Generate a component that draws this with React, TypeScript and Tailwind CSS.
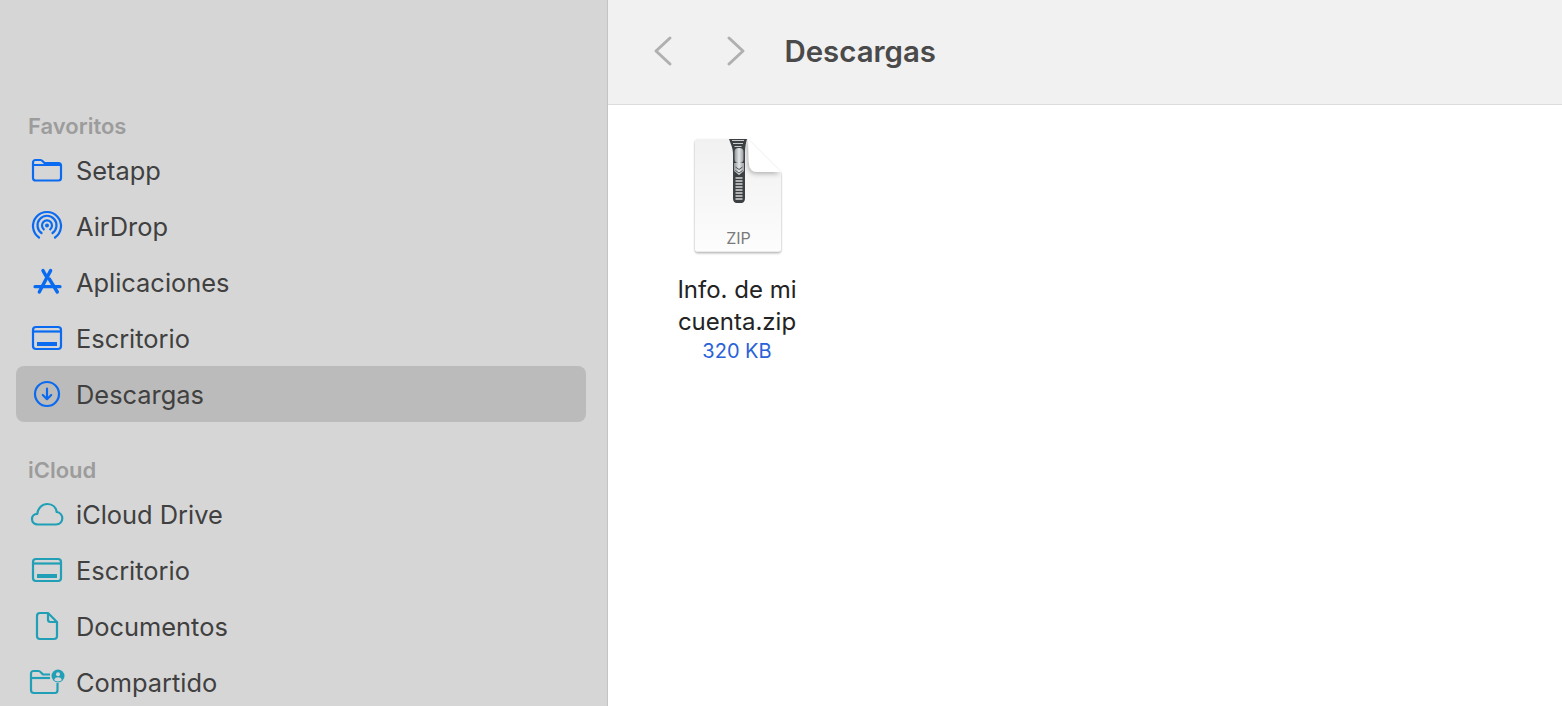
import React from "react";

const BLUE = "#0a6bf0";
const TEAL = "#209fb6";

type IconProps = { color: string };

const FolderIcon = ({ color }: IconProps) => (
  <svg width="32" height="24" viewBox="0 0 32 24" fill="none" stroke={color} strokeWidth="2.2" strokeLinejoin="round">
    <path d="M2 7V4.5C2 3 3 2 4.5 2H9.5C11 2 11.5 3.2 12.5 4L13.5 5H27.5C29.2 5 30 6 30 7.5V20C30 21.6 29.2 22.5 27.5 22.5H4.5C3 22.5 2 21.6 2 20V7H30" />
  </svg>
);

const AirDropIcon = ({ color }: IconProps) => (
  <svg width="32" height="32" viewBox="0 0 32 32" fill="none" stroke={color} strokeWidth="2.2" strokeLinecap="round">
    <path d="M8 27.5A14 14 0 1 1 24 27.5" />
    <path d="M10.5 23A9.5 9.5 0 1 1 21.5 23" />
    <path d="M12.8 19.3A5 5 0 1 1 19.2 19.3" />
    <circle cx="16" cy="15.5" r="2" fill={color} stroke="none" />
  </svg>
);

const AppsIcon = ({ color }: IconProps) => (
  <svg width="32" height="28" viewBox="0 0 32 28" fill="none" stroke={color} strokeLinecap="round">
    <path d="M19.6 2.6L8.3 24" strokeWidth="3.4" />
    <path d="M12 2.6L15 8" strokeWidth="3.4" />
    <path d="M18.3 11L26.3 24" strokeWidth="3.4" />
    <path d="M4 18.7H29" strokeWidth="3.2" />
  </svg>
);

const DesktopIcon = ({ color }: IconProps) => (
  <svg width="32" height="26" viewBox="0 0 32 26" fill="none" stroke={color} strokeWidth="2.2">
    <rect x="2" y="2" width="28" height="22" rx="3" />
    <path d="M2 6.5H30" />
    <rect x="6" y="17" width="20" height="4" fill={color} stroke="none" />
  </svg>
);

const DownloadIcon = ({ color }: IconProps) => (
  <svg width="28" height="28" viewBox="0 0 28 28" fill="none" stroke={color} strokeWidth="2.2" strokeLinecap="round" strokeLinejoin="round">
    <circle cx="14" cy="14" r="12" />
    <path d="M14 8.5V19M9.8 15L14 19.2L18.2 15" />
  </svg>
);

const CloudIcon = ({ color }: IconProps) => (
  <svg width="34" height="24" viewBox="0 0 34 24" fill="none" stroke={color} strokeWidth="2.2" strokeLinejoin="round">
    <path d="M8 22.5C4.2 22.5 2 20 2 17C2 14 4.3 11.8 7.3 11.8C8 6 12 2 17.5 2C22.5 2 26 5.5 26.7 10C30 10.5 32.3 13.2 32.3 16.3C32.3 20 29.6 22.5 26 22.5Z" />
  </svg>
);

const DocIcon = ({ color }: IconProps) => (
  <svg width="24" height="30" viewBox="0 0 24 30" fill="none" stroke={color} strokeWidth="2.2" strokeLinejoin="round">
    <path d="M5 2H13L22 11V25C22 27 21 28 19 28H5C3 28 2 27 2 25V5C2 3 3 2 5 2Z" />
    <path d="M13 2V8.5C13 10 14 11 15.5 11H22" />
  </svg>
);

const SharedIcon = ({ color }: IconProps) => (
  <svg width="36" height="26" viewBox="0 0 36 26" fill="none" stroke={color} strokeWidth="2.2" strokeLinejoin="round">
    <path d="M2 8V4.5C2 3 3 2 4.5 2H9.5C11 2 11.5 3 12.5 4L14 5.5H21" />
    <path d="M2 8V21C2 23 3 24 5 24H26C27.5 24 28.5 23 28.5 21V14" />
    <path d="M2 9H21" />
    <circle cx="29" cy="7" r="6.5" fill={color} stroke="none" />
    <circle cx="29" cy="5.2" r="2" fill="#d6d6d6" stroke="none" />
    <path d="M25.2 11C25.8 8.8 27.2 8.2 29 8.2C30.8 8.2 32.2 8.8 32.8 11C31.8 12 30.5 12.4 29 12.4C27.5 12.4 26.2 12 25.2 11Z" fill="#d6d6d6" stroke="none" />
  </svg>
);

const ZipIcon = () => (
  <svg width="96" height="124" viewBox="0 0 96 124" fill="none">
    <defs>
      <linearGradient id="page" x1="0" y1="0" x2="0" y2="1">
        <stop offset="0" stopColor="#f1f1f1" />
        <stop offset="0.55" stopColor="#f7f7f7" />
        <stop offset="1" stopColor="#fdfdfd" />
      </linearGradient>
      <linearGradient id="pull" x1="0" y1="0" x2="1" y2="0">
        <stop offset="0" stopColor="#8f9599" />
        <stop offset="0.5" stopColor="#e4e6e8" />
        <stop offset="1" stopColor="#9ba0a4" />
      </linearGradient>
      <filter id="pageShadow" x="-10%" y="-10%" width="120%" height="120%">
        <feDropShadow dx="0" dy="1.5" stdDeviation="1" floodColor="#000000" floodOpacity="0.35" />
      </filter>
      <filter id="foldShadow" x="-40%" y="-40%" width="180%" height="180%">
        <feDropShadow dx="-1" dy="1.5" stdDeviation="2.4" floodColor="#000000" floodOpacity="0.3" />
      </filter>
      <clipPath id="pageClip">
        <path d="M8 2H59L92 35V112C92 113.5 91 114.5 89.5 114.5H8.5C7 114.5 6 113.5 6 112V4C6 3 7 2 8 2Z" />
      </clipPath>
    </defs>
    <path d="M8 2H59L92 35V112C92 113.5 91 114.5 89.5 114.5H8.5C7 114.5 6 113.5 6 112V4C6 3 7 2 8 2Z" fill="url(#page)" filter="url(#pageShadow)" />
    <g clipPath="url(#pageClip)">
      <path d="M59 2L92 35H68C63 35 60 31 60 26Z" fill="#ffffff" filter="url(#foldShadow)" />
    </g>
    <path d="M40 2H58C56.5 8 56 11 56 17V61C56 65 54 66 52 66H48C46 66 44 65 44 61V17C44 11 42 8 40 2Z" fill="#3d4043" />
    <path d="M43 3.5H55M44 6.5H54M45.5 9.5H52.5" stroke="#c8cbcd" strokeWidth="1.2" />
    <path d="M46.5 41H53.5M46.5 44H53.5M46.5 47H53.5M46.5 50H53.5M46.5 53H53.5M46.5 56H53.5M46.5 59H53.5M46.5 62H53.5" stroke="#d3d5d7" strokeWidth="1.4" />
    <rect x="45.5" y="11" width="9" height="15" rx="4" fill="url(#pull)" />
    <path d="M45 26H55V34L50 38L45 34Z" fill="url(#pull)" />
    <path d="M46.5 30L50 32.5L53.5 30M46.5 33.5L50 36L53.5 33.5" stroke="#53575a" strokeWidth="1" />
    <text x="49.5" y="107" textAnchor="middle" fontFamily="Inter, sans-serif" fontSize="16" fill="#7a7a7a">ZIP</text>
  </svg>
);

const Row = ({ icon, label, selected }: { icon: React.ReactNode; label: string; selected?: boolean }) => (
  <div className={`flex h-14 items-center rounded-lg pl-3 ${selected ? "bg-[#bbbbbb]" : ""}`}>
    <div className="flex w-[38px] shrink-0 items-center justify-center">{icon}</div>
    <span className="ml-[10px] pt-[2px] text-[25.4px] leading-none text-[#404040]">{label}</span>
  </div>
);

export default function App() {
  return (
    <div className="flex h-[706px] w-[1562px] overflow-hidden bg-white font-['Inter',sans-serif]">
      <aside className="h-full w-[608px] shrink-0 overflow-hidden border-r border-[#c4c4c4] bg-[#d6d6d6] pt-[112px] pr-[21px] pl-4">
        <div className="flex h-[30px] items-center pb-[2px] pl-3 text-[22px] font-semibold text-[#9c9c9c]">Favoritos</div>
        <Row icon={<FolderIcon color={BLUE} />} label="Setapp" />
        <Row icon={<AirDropIcon color={BLUE} />} label="AirDrop" />
        <Row icon={<AppsIcon color={BLUE} />} label="Aplicaciones" />
        <Row icon={<DesktopIcon color={BLUE} />} label="Escritorio" />
        <Row icon={<DownloadIcon color={BLUE} />} label="Descargas" selected />
        <div className="mt-[34px] flex h-[30px] items-center pb-[2px] pl-3 text-[22px] font-semibold text-[#9c9c9c]">iCloud</div>
        <Row icon={<CloudIcon color={TEAL} />} label="iCloud Drive" />
        <Row icon={<DesktopIcon color={TEAL} />} label="Escritorio" />
        <Row icon={<DocIcon color={TEAL} />} label="Documentos" />
        <Row icon={<SharedIcon color={TEAL} />} label="Compartido" />
      </aside>
      <main className="min-w-0 flex-1">
        <header className="flex h-[105px] items-center border-b border-[#dcdcdc] bg-[#f1f1f1] pb-[2px] pl-[44px]">
          <svg width="24" height="32" viewBox="0 0 24 32" fill="none" stroke="#b0b0b0" strokeWidth="3" strokeLinecap="round" strokeLinejoin="round">
            <path d="M18 3L4 16L18 29" />
          </svg>
          <svg className="ml-[48px]" width="24" height="32" viewBox="0 0 24 32" fill="none" stroke="#b0b0b0" strokeWidth="3" strokeLinecap="round" strokeLinejoin="round">
            <path d="M5 3L19 16L5 29" />
          </svg>
          <h1 className="ml-[36.5px] pt-[2px] text-[29.4px] font-semibold text-[#4a4a4a]">Descargas</h1>
        </header>
        <div className="flex w-[258px] flex-col items-center pt-[32px]">
          <ZipIcon />
          <div className="mt-[13px] text-center text-[24px] leading-[32px] text-[#232323]">
            Info. de mi
            <br />
            cuenta.zip
          </div>
          <div className="text-[20px] leading-[26px] text-[#2a62d8]">320 KB</div>
        </div>
      </main>
    </div>
  );
}
